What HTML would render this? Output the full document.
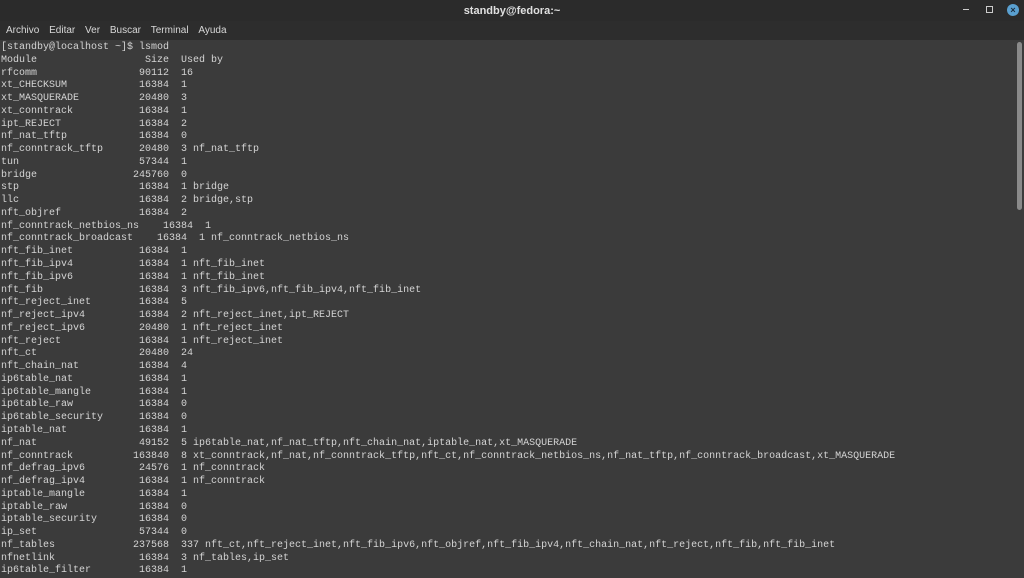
<!DOCTYPE html>
<html><head><meta charset="utf-8"><style>
html,body{margin:0;padding:0;width:1024px;height:575px;overflow:hidden;background:#3b3b3b;}
#title{position:absolute;left:0;top:0;width:1024px;height:21px;background:#2b2b2b;color:#e0e0e0;font:bold 11px "Liberation Sans",sans-serif;text-align:center;line-height:22px;}
#menu{position:absolute;left:0;top:21px;width:1024px;height:19px;background:#2d2d2d;color:#d8d8d8;font:10px "Liberation Sans",sans-serif;line-height:19px;}
#menu span{margin-left:6px;margin-right:1px;}
pre{position:absolute;left:1px;top:42px;margin:0;font:10px/12.76px "Liberation Mono",monospace;color:#d4d4d4;}
#sb{position:absolute;left:1017px;top:42px;width:5px;height:168px;background:#8a8a8a;border-radius:3px;}
#close{position:absolute;left:1007px;top:4px;width:12px;height:12px;border-radius:50%;background:#5aa0d0;color:#1a2a3a;font:bold 9px "Liberation Sans",sans-serif;text-align:center;line-height:12px;}
</style></head><body>
<div id="title">standby@fedora:~</div>
<div style="position:absolute;left:963px;top:9px;width:6px;height:1px;background:#ccc"></div>
<div style="position:absolute;left:986px;top:6px;width:5px;height:5px;border:1px solid #ccc"></div>
<div id="close">×</div>
<div id="menu"><span>Archivo</span> <span>Editar</span> <span>Ver</span> <span>Buscar</span> <span>Terminal</span> <span>Ayuda</span></div>
<pre>[standby@localhost ~]$ lsmod
Module                  Size  Used by
rfcomm                 90112  16
xt_CHECKSUM            16384  1
xt_MASQUERADE          20480  3
xt_conntrack           16384  1
ipt_REJECT             16384  2
nf_nat_tftp            16384  0
nf_conntrack_tftp      20480  3 nf_nat_tftp
tun                    57344  1
bridge                245760  0
stp                    16384  1 bridge
llc                    16384  2 bridge,stp
nft_objref             16384  2
nf_conntrack_netbios_ns    16384  1
nf_conntrack_broadcast    16384  1 nf_conntrack_netbios_ns
nft_fib_inet           16384  1
nft_fib_ipv4           16384  1 nft_fib_inet
nft_fib_ipv6           16384  1 nft_fib_inet
nft_fib                16384  3 nft_fib_ipv6,nft_fib_ipv4,nft_fib_inet
nft_reject_inet        16384  5
nf_reject_ipv4         16384  2 nft_reject_inet,ipt_REJECT
nf_reject_ipv6         20480  1 nft_reject_inet
nft_reject             16384  1 nft_reject_inet
nft_ct                 20480  24
nft_chain_nat          16384  4
ip6table_nat           16384  1
ip6table_mangle        16384  1
ip6table_raw           16384  0
ip6table_security      16384  0
iptable_nat            16384  1
nf_nat                 49152  5 ip6table_nat,nf_nat_tftp,nft_chain_nat,iptable_nat,xt_MASQUERADE
nf_conntrack          163840  8 xt_conntrack,nf_nat,nf_conntrack_tftp,nft_ct,nf_conntrack_netbios_ns,nf_nat_tftp,nf_conntrack_broadcast,xt_MASQUERADE
nf_defrag_ipv6         24576  1 nf_conntrack
nf_defrag_ipv4         16384  1 nf_conntrack
iptable_mangle         16384  1
iptable_raw            16384  0
iptable_security       16384  0
ip_set                 57344  0
nf_tables             237568  337 nft_ct,nft_reject_inet,nft_fib_ipv6,nft_objref,nft_fib_ipv4,nft_chain_nat,nft_reject,nft_fib,nft_fib_inet
nfnetlink              16384  3 nf_tables,ip_set
ip6table_filter        16384  1</pre>
<div id="sb"></div>
</body></html>
